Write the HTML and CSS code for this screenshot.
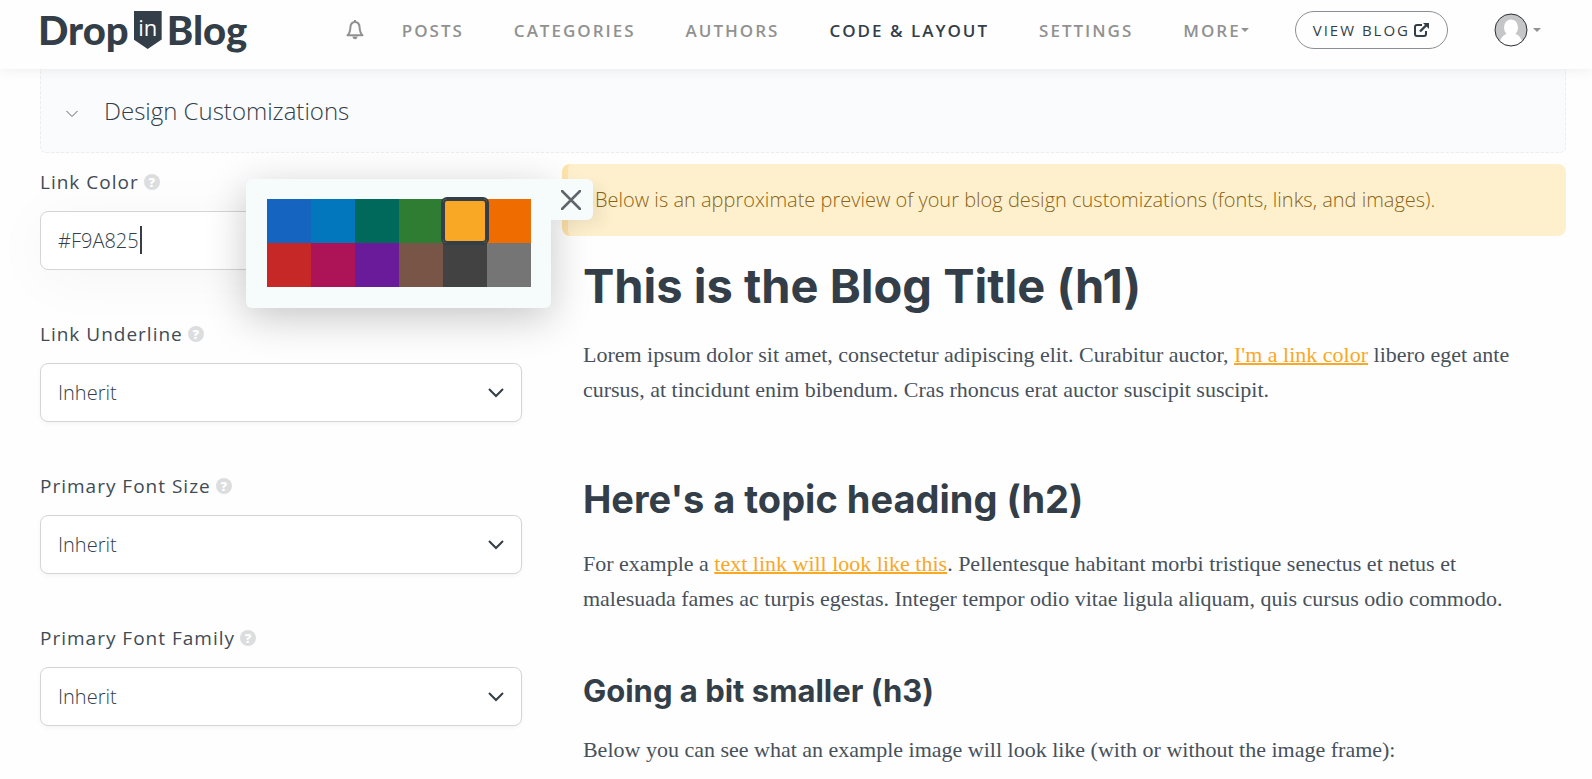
FILE: index.html
```html
<!DOCTYPE html>
<html lang="en">
<head>
  <meta charset="UTF-8" />
  <title>DropInBlog - Code &amp; Layout</title>
  <link rel="stylesheet" href="styles.css">
</head>
<body>

  <header class="header">
    <a href="#" class="logo">
      <span>Drop</span>
      <span class="logo-badge">in</span>
      <span>Blog</span>
    </a>

    <nav class="nav">
      <a href="#" class="bell" aria-label="Notifications">
        <svg width="18" height="20" viewBox="0 0 18 20" fill="none" stroke="#919191" stroke-width="2">
          <path d="M9 2C5.600 2 4.600 4.500 4.400 7.500C4.200 11 3.500 13.500 1.500 15.300H16.500C14.500 13.500 13.800 11 13.600 7.500C13.400 4.500 12.400 2 9 2Z" stroke-linejoin="round"/>
          <path d="M9 0V2"/>
          <path d="M6.500 16.500H11.500C11.300 18.600 10.400 19.200 9 19.200C7.600 19.200 6.700 18.600 6.500 16.500Z" fill="#919191" stroke="none"/>
        </svg>
      </a>
      <a href="#">POSTS</a>
      <a href="#">CATEGORIES</a>
      <a href="#">AUTHORS</a>
      <a href="#" class="active">CODE &amp; LAYOUT</a>
      <a href="#">SETTINGS</a>
      <a href="#" class="more">MORE<span class="caret"></span></a>
    </nav>

    <a href="#" class="view-blog">VIEW BLOG
      <svg width="15" height="14" viewBox="0 0 15 14" fill="none" stroke="#333e48" stroke-width="2">
        <path d="M8 2H3Q1 2 1 4V11Q1 13 3 13H10Q12 13 12 11V8"/>
        <path d="M6 8.500L12.500 2" stroke-width="2.400"/>
        <path d="M9 0H15V6Z" fill="#333e48" stroke="none"/>
      </svg>
    </a>

    <button type="button" class="account" aria-label="Account">
      <svg width="34" height="34" viewBox="0 0 34 34">
        <circle cx="17" cy="17" r="16" fill="#c4c6c7"/>
        <ellipse cx="17" cy="14.500" rx="7" ry="8" fill="#fff"/>
        <path d="M6 28.500C8 22 12 20.500 17 20.500S26 22 28 28.500A16 16 0 0 1 6 28.500Z" fill="#fff"/>
        <circle cx="17" cy="17" r="16" fill="none" stroke="#2b2f33"/>
      </svg>
      <span class="caret"></span>
    </button>
  </header>

  <main class="page">
    <div class="section-title">
      <svg width="12" height="14" viewBox="0 0 12 14" fill="none" stroke="#5a636b" stroke-width="1">
        <path d="M0.500 7L6 12.500L11.500 7"/>
      </svg>
      <h4>Design Customizations</h4>
    </div>

    <div class="columns">
      <!-- settings -->
      <form class="settings">
        <div class="field">
          <div class="label-row">
            <label for="linkColor">Link Color</label>
            <span class="help">?</span>
          </div>
          <input id="linkColor" class="control focused" type="text" value="#F9A825">
          <span class="text-cursor"></span>

          <div class="picker">
            <div class="swatches">
              <button type="button" class="swatch blue" aria-label="Blue"></button>
              <button type="button" class="swatch light-blue" aria-label="Light blue"></button>
              <button type="button" class="swatch teal" aria-label="Teal"></button>
              <button type="button" class="swatch green" aria-label="Green"></button>
              <button type="button" class="swatch yellow selected" aria-label="Yellow"></button>
              <button type="button" class="swatch orange" aria-label="Orange"></button>
              <button type="button" class="swatch red" aria-label="Red"></button>
              <button type="button" class="swatch pink" aria-label="Pink"></button>
              <button type="button" class="swatch purple" aria-label="Purple"></button>
              <button type="button" class="swatch brown" aria-label="Brown"></button>
              <button type="button" class="swatch dark-grey" aria-label="Dark grey"></button>
              <button type="button" class="swatch grey" aria-label="Grey"></button>
            </div>
            <button type="button" class="picker-close" aria-label="Close">
              <svg width="20" height="20" viewBox="0 0 20 20" fill="none" stroke="#5f656b" stroke-width="2.500">
                <path d="M1 1L19 19M19 1L1 19" stroke-linecap="round"/>
              </svg>
            </button>
          </div>
        </div>

        <div class="field">
          <div class="label-row">
            <label for="linkUnderline">Link Underline</label>
            <span class="help">?</span>
          </div>
          <select id="linkUnderline" class="control">
            <option>Inherit</option>
          </select>
        </div>

        <div class="field">
          <div class="label-row">
            <label for="fontSize">Primary Font Size</label>
            <span class="help">?</span>
          </div>
          <select id="fontSize" class="control">
            <option>Inherit</option>
          </select>
        </div>

        <div class="field">
          <div class="label-row">
            <label for="fontFamily">Primary Font Family</label>
            <span class="help">?</span>
          </div>
          <select id="fontFamily" class="control">
            <option>Inherit</option>
          </select>
        </div>
      </form>

      <!-- preview -->
      <section class="preview">
        <div class="alert">Below is an approximate preview of your blog design customizations (fonts, links, and images).</div>
        <article class="post">
          <h1>This is the Blog Title (h1)</h1>
          <p>Lorem ipsum dolor sit amet, consectetur adipiscing elit. Curabitur auctor, <a href="#">I'm a link color</a> libero eget ante cursus, at tincidunt enim bibendum. Cras rhoncus erat auctor suscipit suscipit.</p>
          <h2>Here's a topic heading (h2)</h2>
          <p>For example a <a href="#">text link will look like this</a>. Pellentesque habitant morbi tristique senectus et netus et malesuada fames ac turpis egestas. Integer tempor odio vitae ligula aliquam, quis cursus odio commodo.</p>
          <h3>Going a bit smaller (h3)</h3>
          <p>Below you can see what an example image will look like (with or without the image frame):</p>
        </article>
      </section>
    </div>
  </main>

</body>
</html>
```
FILE: styles.css
```css
* {
  box-sizing: border-box;
}
body {
  margin: 0;
  font-family: "Open Sans", sans-serif;
  background-color: #fefefe;
  color: #333e48;
}
a {
  color: inherit;
  text-decoration: none;
}
button {
  border: 0;
  padding: 0;
  background: none;
  cursor: pointer;
}

/* header */
.header {
  position: relative;
  z-index: 1;
  display: flex;
  align-items: center;
  height: 69px;
  padding: 0 51px 9px 38px;
  background-color: #fefefe;
  box-shadow: 0 0 14px rgba(0, 0, 0, 0.08);
}
.logo {
  display: flex;
  align-items: center;
  gap: 5px;
  font-family: Lato, sans-serif;
  font-size: 40px;
  font-weight: 900;
  line-height: 48px;
}
.logo-badge {
  width: 28px;
  height: 38px;
  background-color: #333e48;
  clip-path: polygon(0 0, 100% 0, 100% 75%, 50% 100%, 0 75%);
  color: #fff;
  font-family: "Open Sans", sans-serif;
  font-size: 22px;
  font-weight: 400;
  line-height: 32px;
  text-align: center;
}
.nav {
  display: flex;
  align-items: center;
  gap: 50px;
  margin-left: auto;
  color: #919191;
  font-size: 17px;
  font-weight: 600;
  letter-spacing: 2px;
}
.nav a {
  white-space: nowrap;
}
.bell {
  display: flex;
  margin-right: -12px;
}
.nav .active {
  color: #333e48;
}
.more {
  display: flex;
  align-items: center;
}
.caret {
  border: 4px solid transparent;
  border-top-color: #919191;
  border-bottom: 0;
}
.view-blog {
  display: flex;
  align-items: center;
  gap: 4px;
  height: 38px;
  margin-left: 46px;
  padding: 0 18px 0 17px;
  border: 1px solid #8b8f93;
  border-radius: 19px;
  font-size: 15px;
  font-weight: 500;
  letter-spacing: 2px;
  white-space: nowrap;
}
.account {
  display: flex;
  align-items: center;
  gap: 5px;
  margin-left: 46px;
}

/* page */
.page {
  padding: 0 26px 0 40px;
}
.section-title {
  display: flex;
  align-items: center;
  gap: 26px;
  height: 84px;
  padding: 0 25px;
  border: 1px dashed #ececec;
  border-top: 0;
  border-radius: 0 0 6px 6px;
  background-color: #fafbfd;
}
.section-title h4 {
  margin: 0;
  font-size: 24px;
  font-weight: 300;
}
.columns {
  display: grid;
  grid-template-columns: 12fr 25fr;
  gap: 40px;
  padding-top: 11px;
}

/* settings */
.settings {
  display: flex;
  flex-direction: column;
  gap: 50px;
  padding-top: 4px;
}
.field {
  position: relative;
}
.label-row {
  display: flex;
  align-items: center;
  gap: 5px;
  margin-bottom: 15px;
  color: #414b55;
  font-size: 19px;
  line-height: 28px;
  letter-spacing: 1px;
}
.help {
  width: 16px;
  height: 16px;
  border-radius: 50%;
  background-color: #dcdddf;
  color: #fff;
  font-size: 13px;
  font-weight: 800;
  line-height: 16px;
  letter-spacing: 0;
  text-align: center;
}
.control {
  display: block;
  width: 100%;
  height: 59px;
  padding: 0 17px;
  border: 1px solid #d3d5d6;
  border-radius: 8px;
  outline: none;
  background-color: #fff;
  box-shadow: 0 2px 4px rgba(0, 0, 0, 0.04);
  color: #333e48;
  font-family: "Open Sans", sans-serif;
  font-size: 20px;
  font-weight: 300;
}
.control.focused {
  box-shadow: 0 8px 60px rgba(0, 0, 0, 0.04);
}
select.control {
  appearance: none;
  background-image: url("data:image/svg+xml,%3Csvg xmlns='http://www.w3.org/2000/svg' width='16' height='10' fill='none' stroke='%23333e48' stroke-width='2'%3E%3Cpath d='M1 1L8 8L15 1'/%3E%3C/svg%3E");
  background-repeat: no-repeat;
  background-position: right 17px center;
}
.text-cursor {
  position: absolute;
  left: 100px;
  top: 58px;
  width: 2px;
  height: 28px;
  background-color: #333e48;
}

/* color picker */
.picker {
  position: absolute;
  z-index: 2;
  left: 206px;
  top: 11px;
  padding: 20px 20px 21px 21px;
  border-radius: 6px 0 6px 6px;
  background-color: #f6fbfc;
  box-shadow: 0 10px 40px rgba(0, 0, 0, 0.22);
}
.swatches {
  display: grid;
  grid-template-columns: repeat(6, 44px);
  grid-auto-rows: 44px;
}
.picker-close {
  position: absolute;
  left: 100%;
  top: 0;
  display: flex;
  align-items: center;
  width: 42px;
  height: 41px;
  padding-left: 10px;
  border-radius: 0 6px 6px 0;
  background-color: #f6fbfc;
  box-shadow: 10px 6px 14px rgba(0, 0, 0, 0.06);
}
.selected {
  z-index: 1;
  border-radius: 4px;
  box-shadow: 0 0 0 2px #333e48, inset 0 0 0 2px #333e48;
}
.blue { background-color: #1565c0; }
.light-blue { background-color: #0277bd; }
.teal { background-color: #00695c; }
.green { background-color: #2e7d32; }
.yellow { background-color: #f9a825; }
.orange { background-color: #ef6c00; }
.red { background-color: #c62828; }
.pink { background-color: #ad1457; }
.purple { background-color: #6a1b9a; }
.brown { background-color: #795548; }
.dark-grey { background-color: #424242; }
.grey { background-color: #757575; }

/* preview */
.alert {
  margin-bottom: 22px;
  padding: 20px 27px;
  border-left: 6px solid #ffe3ab;
  border-radius: 8px;
  background-color: #fff0cd;
  color: #8a6414;
  font-size: 20px;
  font-weight: 300;
  line-height: 32px;
}
.post {
  padding: 0 21px;
}
.post h1,
.post h2,
.post h3 {
  margin: 0 0 23px;
  font-family: Inter, sans-serif;
  font-weight: 700;
}
.post h1 {
  font-size: 47px;
  line-height: 56px;
}
.post h2 {
  font-size: 38px;
  line-height: 48px;
}
.post h3 {
  font-size: 31px;
  line-height: 36px;
}
.post p {
  margin: 0;
  color: #47515b;
  font-family: "Liberation Serif", serif;
  font-size: 22px;
  line-height: 35px;
}
.post p + h2 {
  margin-top: 68px;
}
.post p + h3 {
  margin-top: 57px;
}
.post a {
  color: #f9a825;
  text-decoration: underline;
  text-decoration-thickness: 2px;
}
```
